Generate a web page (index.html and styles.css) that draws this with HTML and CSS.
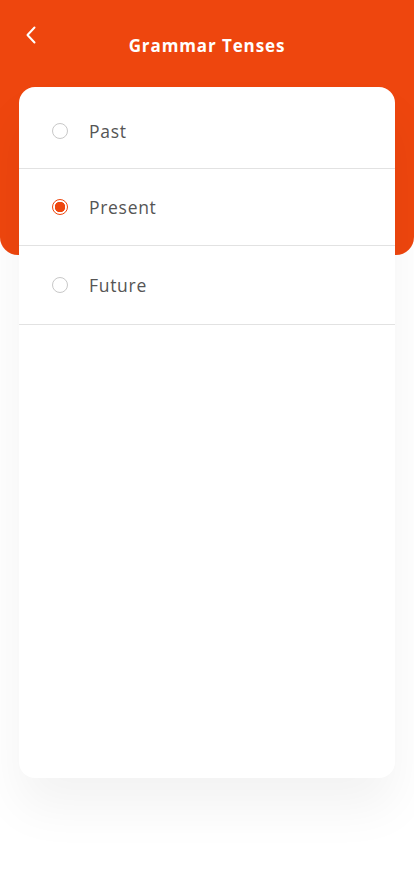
FILE: index.html
```html
<!DOCTYPE html>
<html>
<head>
<meta charset="utf-8">
<link rel="stylesheet" href="styles.css">
</head>
<body>
<div class="screen">
  <header class="header">
    <button class="back" aria-label="Back">
      <svg width="12" height="18" viewBox="0 0 12 18"><path d="M9.5 1.5 L2.5 9 L9.5 16.5" fill="none" stroke="#fff" stroke-width="2" stroke-linecap="round" stroke-linejoin="round"/></svg>
    </button>
    <h1 class="title">Grammar Tenses</h1>
  </header>
  <main class="card">
    <label class="row">
      <span class="radio"></span>
      <span class="label">Past</span>
    </label>
    <label class="row">
      <span class="radio checked"></span>
      <span class="label">Present</span>
    </label>
    <label class="row">
      <span class="radio"></span>
      <span class="label">Future</span>
    </label>
  </main>
</div>
</body>
</html>
```
FILE: styles.css
```css
* { box-sizing: border-box; }
html, body { margin: 0; padding: 0; background: #fff; }
body { font-family: "Open Sans", "Noto Sans", sans-serif; }
.screen { width: 414px; height: 896px; position: relative; overflow: hidden; }
.header {
  background: #ee460e;
  height: 255px;
  border-radius: 0 0 18px 18px;
  padding: 27px 0 0;
  position: relative;
}
.back {
  position: absolute;
  left: 24px;
  top: 26px;
  background: none;
  border: 0;
  padding: 0;
  width: 14px;
  height: 18px;
}
.title {
  margin: 0;
  padding-top: 9px;
  text-align: center;
  color: #fff;
  font-size: 17px;
  font-weight: 700;
  letter-spacing: 0.9px;
  line-height: 20px;
}
.card {
  position: absolute;
  left: 19px;
  top: 87px;
  width: 376px;
  height: 691px;
  background: #fff;
  border-radius: 16px;
  box-shadow: 0 30px 50px rgba(0,0,0,0.05);
  display: flex;
  flex-direction: column;
}
.row {
  display: flex;
  align-items: center;
  height: 78px;
  border-bottom: 1px solid #e2e2e2;
  padding-left: 33px;
}
.row:first-child { height: 82px; padding-top: 7px; }
.row:nth-child(2) { height: 77px; }
.row:nth-child(3) { height: 79px; }
.radio {
  width: 16px;
  height: 16px;
  border-radius: 50%;
  border: 1px solid #c8c8c8;
  flex: none;
}
.radio.checked {
  border: 1.5px solid #ee460e;
  background: radial-gradient(circle, #ee460e 0 5px, #fff 5.5px);
}
.label {
  margin-left: 21px;
  font-size: 17.5px;
  font-weight: 500;
  color: #555;
  letter-spacing: 0.7px;
}
```
